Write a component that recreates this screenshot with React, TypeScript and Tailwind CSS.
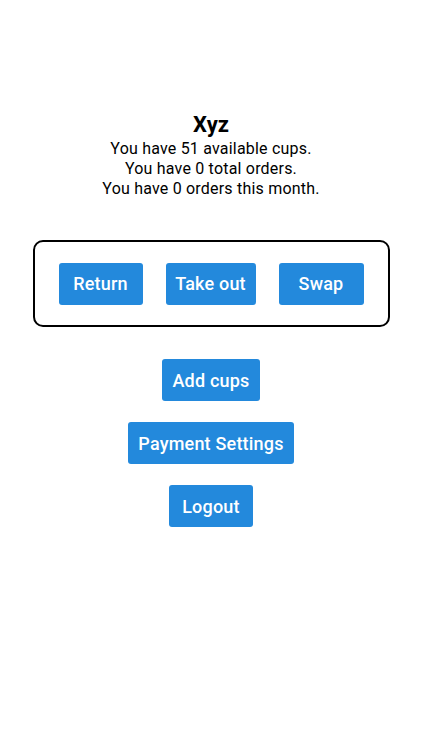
const btn =
  'h-[42px] px-[10px] rounded-[3px] bg-[#2389dc] text-white text-[18px] font-medium tracking-[0.2px] whitespace-nowrap flex items-center justify-center'

export default function App() {
  return (
    <div className="w-[422px] h-[750px] bg-white flex flex-col items-center font-['Roboto',sans-serif] text-black">
      {/* Header */}
      <div className="mt-[112px] flex flex-col items-center">
        <h1 className="text-[22px] font-bold leading-[26px]">Xyz</h1>
        <p className="text-[16px] leading-[20px] text-center tracking-[0.2px] mt-[1px]">
          You have 51 available cups.
          <br />
          You have 0 total orders.
          <br />
          You have 0 orders this month.
        </p>
      </div>

      {/* Cup actions */}
      <div className="mt-[41px] w-[357px] h-[87px] border-2 border-black rounded-[10px] flex items-center justify-evenly px-[1px]">
        <button className={`${btn} w-[84px] px-0`}>Return</button>
        <button className={`${btn} w-[90px] px-0`}>Take out</button>
        <button className={`${btn} w-[85px] px-0`}>Swap</button>
      </div>

      {/* Account */}
      <div className="mt-[32px] flex flex-col items-center gap-[21px]">
        <button className={btn}>Add cups</button>
        <button className={btn}>Payment Settings</button>
        <button className={`${btn} w-[84px]`}>Logout</button>
      </div>
    </div>
  )
}
